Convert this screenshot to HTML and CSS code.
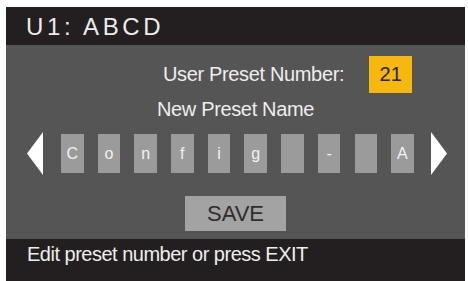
FILE: index.html
```html
<!DOCTYPE html>
<html>
<head>
<meta charset="utf-8">
<link rel="stylesheet" href="styles.css">
</head>
<body>
<div class="screen">
  <div class="header"><span class="title">U1: ABCD</span></div>
  <div class="main">
    <div class="row-number">
      <span class="label">User Preset Number:</span>
      <span class="number">21</span>
    </div>
    <div class="name-label">New Preset Name</div>
    <div class="chars">
      <svg class="arrow" width="16" height="43" viewBox="0 0 16 43"><polygon points="0,21.5 16,0 16,43" fill="#ffffff"/></svg>
      <div class="boxes">
        <span class="box">C</span>
        <span class="box">o</span>
        <span class="box">n</span>
        <span class="box">f</span>
        <span class="box">i</span>
        <span class="box">g</span>
        <span class="box"></span>
        <span class="box">-</span>
        <span class="box"></span>
        <span class="box">A</span>
      </div>
      <svg class="arrow" width="16" height="43" viewBox="0 0 16 43"><polygon points="16,21.5 0,0 0,43" fill="#ffffff"/></svg>
    </div>
    <div class="save-row"><span class="save">SAVE</span></div>
  </div>
  <div class="footer"><span class="hint">Edit preset number or press EXIT</span></div>
</div>
</body>
</html>
```
FILE: styles.css
```css
html, body {
  margin: 0;
  padding: 0;
  background: #ffffff;
}
body {
  width: 468px;
  height: 281px;
  overflow: hidden;
  font-family: "Liberation Sans", Arial, sans-serif;
}
.screen {
  margin-left: 6px;
  margin-top: 7px;
  width: 459px;
  height: 274px;
  display: flex;
  flex-direction: column;
  background: #555555;
}
.header {
  height: 38px;
  background: #231f20;
  display: flex;
  align-items: center;
  padding-left: 20px;
}
.title {
  color: #ececec;
  font-size: 24px;
  letter-spacing: 3.6px;
  line-height: 1;
  margin-top: 1px;
}
.main {
  flex: 1;
  display: flex;
  flex-direction: column;
}
.row-number {
  margin-top: 11px;
  height: 37px;
  display: flex;
  align-items: center;
  padding-left: 157px;
}
.label {
  color: #eeeeee;
  font-size: 20px;
  letter-spacing: -0.35px;
}
.number {
  margin-left: 25px;
  width: 43px;
  height: 37px;
  background: #f6b80f;
  color: #2a2418;
  font-size: 20px;
  display: flex;
  align-items: center;
  justify-content: center;
}
.name-label {
  margin-top: 4px;
  height: 24px;
  line-height: 24px;
  text-align: center;
  color: #eeeeee;
  font-size: 20px;
  letter-spacing: -0.35px;
}
.chars {
  margin-top: 11px;
  height: 43px;
  display: flex;
  align-items: center;
  padding-left: 21px;
}
.arrow {
  display: block;
}
.boxes {
  display: flex;
  gap: 14.2px;
  margin: 0 17px 0 18px;
}
.box {
  width: 22.5px;
  height: 39px;
  background: #9b9b9b;
  color: #f2f2f2;
  font-size: 16px;
  display: flex;
  align-items: center;
  justify-content: center;
}
.save-row {
  margin-top: 21px;
  display: flex;
  justify-content: center;
}
.save {
  width: 101px;
  height: 35px;
  background: #a3a3a3;
  color: #2e2e2e;
  font-size: 22px;
  display: flex;
  align-items: center;
  justify-content: center;
}
.footer {
  height: 42px;
  background: #231f20;
  display: flex;
  align-items: flex-start;
  padding-left: 21px;
}
.hint {
  color: #eeeeee;
  font-size: 20px;
  letter-spacing: -0.5px;
  line-height: 1;
  margin-top: 5px;
}
```
